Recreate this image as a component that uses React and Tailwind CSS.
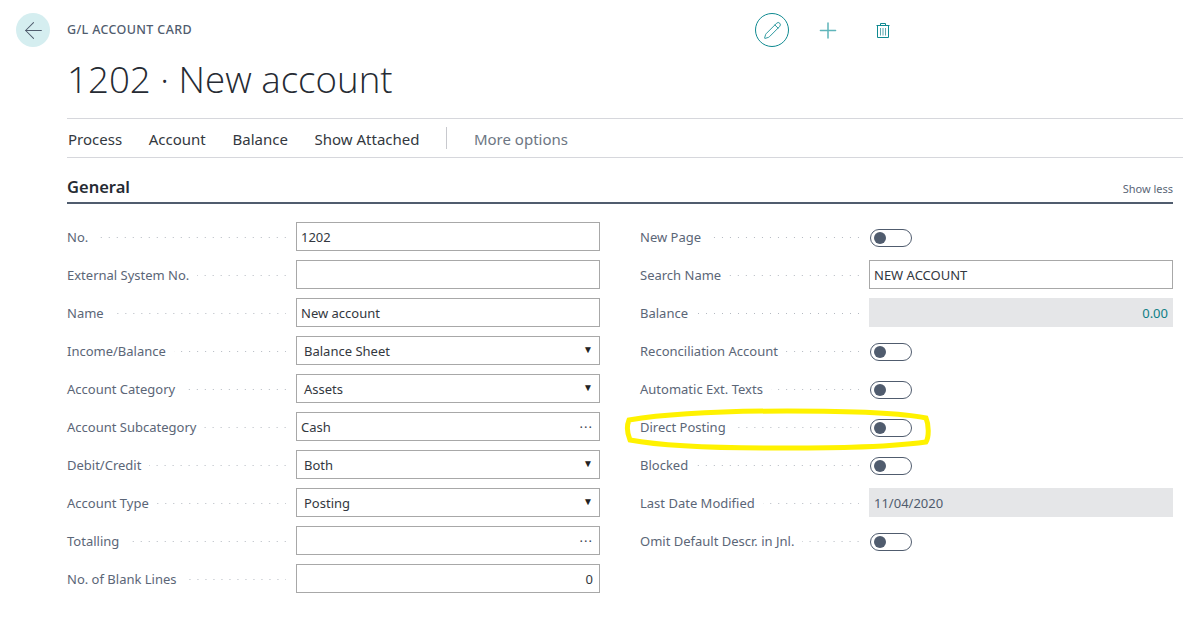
import React from 'react';
import { ArrowLeft, Pencil, Plus } from 'lucide-react';

const font = "font-['Noto_Sans','Open_Sans',sans-serif]";

const leftRows = [
  { label: 'No.', value: '1202' },
  { label: 'External System No.', value: '' },
  { label: 'Name', value: 'New account' },
  { label: 'Income/Balance', value: 'Balance Sheet', kind: 'select' },
  { label: 'Account Category', value: 'Assets', kind: 'select' },
  { label: 'Account Subcategory', value: 'Cash', kind: 'lookup' },
  { label: 'Debit/Credit', value: 'Both', kind: 'select' },
  { label: 'Account Type', value: 'Posting', kind: 'select' },
  { label: 'Totalling', value: '', kind: 'lookup' },
  { label: 'No. of Blank Lines', value: '0', kind: 'number' },
];

const rightRows = [
  { label: 'New Page', kind: 'toggle' },
  { label: 'Search Name', value: 'NEW ACCOUNT' },
  { label: 'Balance', value: '0.00', kind: 'readonlyNumber' },
  { label: 'Reconciliation Account', kind: 'toggle' },
  { label: 'Automatic Ext. Texts', kind: 'toggle' },
  { label: 'Direct Posting', kind: 'toggle' },
  { label: 'Blocked', kind: 'toggle' },
  { label: 'Last Date Modified', value: '11/04/2020', kind: 'readonly' },
  { label: 'Omit Default Descr. in Jnl.', kind: 'toggle' },
];

function TrashIcon() {
  return (
    <svg width="14" height="17" viewBox="0 0 14 17" fill="none" stroke="#0f8a91" strokeWidth="1">
      <path d="M0.5 3.5H13.5" />
      <path d="M4.5 3.5V1.5H9.5V3.5" />
      <path d="M1.5 3.5V15.5H12.5V3.5" />
      <path d="M4.5 6V13.5M7 6V13.5M9.5 6V13.5" stroke="#5fa9ae" />
    </svg>
  );
}

function Control({ value, kind }) {
  if (kind === 'toggle') {
    return (
      <div className="ml-px mt-[2px] flex h-[18px] w-[42px] items-center rounded-full border border-[#505c6e] pl-[3px]">
        <div className="h-[12px] w-[12px] rounded-full bg-[#505c6e]" />
      </div>
    );
  }
  if (kind === 'readonlyNumber') {
    return (
      <div className="flex h-[29px] w-[304px] items-center justify-end bg-[#e5e6e8] pr-[5px] pt-[2px] text-[#0f7f86]">{value}</div>
    );
  }
  if (kind === 'readonly') {
    return <div className="flex h-[29px] w-[304px] items-center bg-[#e5e6e8] pl-[5px] pt-[2px] text-[#505c6e]">{value}</div>;
  }
  return (
    <div className="flex h-[29px] w-[304px] items-center justify-between border border-[#a8a8a8] pl-[4px] pr-[6px] pt-[2px] text-[#333840]">
      <span className={kind === 'select' ? 'pl-[3px]' : ''}>{kind === 'number' ? '' : value}</span>
      {kind === 'select' && <span className="mb-[4px] text-[10px] text-[#222]">▼</span>}
      {kind === 'lookup' && <span className="text-[13px] tracking-[1px] text-[#3c4554]">···</span>}
      {kind === 'number' && <span>{value}</span>}
    </div>
  );
}

function FieldRow({ label, value, kind }) {
  return (
    <div className="flex h-[29px] items-center">
      <div className="flex h-full w-[229px] items-center pr-[10px] pt-[2px]">
        <span className="whitespace-nowrap text-[#5b6677]">{label}</span>
        <span className="ml-[8px] h-px flex-1 bg-[linear-gradient(to_left,#b4b9c1_1px,transparent_1px)] bg-[length:8px_1px] bg-right bg-repeat-x" />
      </div>
      <Control value={value} kind={kind} />
    </div>
  );
}

export default function App() {
  return (
    <div className={`relative h-[639px] w-[1183px] overflow-hidden bg-white text-[13px] ${font}`}>
      <div className="flex">
        {/* Back button */}
        <div className="w-[67px] pl-[16px] pt-[13px]">
          <div className="flex h-[34px] w-[34px] items-center justify-center rounded-full bg-[#d5eef0]">
            <ArrowLeft className="h-[27px] w-[27px] text-[#505c6e]" strokeWidth={0.9} />
          </div>
        </div>

        <div className="flex-1">
          {/* Header */}
          <div className="flex h-[118px] justify-between">
            <div>
              <div className="pt-[21px] text-[12.5px] font-medium leading-[17px] tracking-[0.35px] text-[#505c6e]">G/L ACCOUNT CARD</div>
              <h1 className="mt-[16px] font-['Open_Sans',sans-serif] text-[36.7px] font-light leading-[50px] text-[#262b33]">1202 · New account</h1>
            </div>
            <div className="mr-[293px] flex items-start pt-[13px] text-[#0f8a91]">
              <div className="flex h-[34px] w-[34px] items-center justify-center rounded-full border border-[#0f8a91]">
                <Pencil className="h-[19px] w-[19px]" strokeWidth={1.1} />
              </div>
              <div className="ml-[26px] flex h-[34px] w-[26px] items-center justify-center">
                <Plus className="h-[27px] w-[27px] text-[#5fb5ba]" strokeWidth={1.4} />
              </div>
              <div className="ml-[35px] flex h-[34px] w-[14px] items-center justify-center">
                <TrashIcon />
              </div>
            </div>
          </div>

          {/* Action bar */}
          <div className="flex h-[40px] items-center gap-[26.7px] border-y border-[#d6d7dc] pl-px pt-[2px] text-[15px] text-[#333840]">
            <span>Process</span>
            <span>Account</span>
            <span>Balance</span>
            <span>Show Attached</span>
            <span className="mb-[2px] h-[22px] w-px bg-[#c8c9ce]" />
            <span className="text-[#6d7683]">More options</span>
          </div>

          {/* General section */}
          <div className="mr-[10px] mt-[15px] flex h-[31px] items-center justify-between border-b-2 border-[#505c6e] pb-[1px]">
            <span className="text-[16.5px] font-semibold text-[#262b33]">General</span>
            <span className="pt-[5px] text-[11px] text-[#5b6677]">Show less</span>
          </div>

          <div className="mt-[18px] flex">
            <div className="flex w-[573px] flex-col gap-[9px]">
              {leftRows.map((row) => (
                <FieldRow key={row.label} {...row} />
              ))}
            </div>
            <div className="flex flex-col gap-[9px]">
              {rightRows.map((row) => (
                <FieldRow key={row.label} {...row} />
              ))}
            </div>
          </div>
        </div>
      </div>

      {/* Yellow highlight drawn over the Direct Posting row */}
      <svg className="pointer-events-none absolute left-[622px] top-[405px]" width="312" height="50" viewBox="0 0 312 50">
        <path
          d="M7 15 C50 8 120 6 165 6 C220 6 280 8 304 13 C307 20 307 32 304 37 C260 43 200 43 150 43 C90 43 40 41 8 35 C5 28 5 20 7 15 Z"
          fill="none"
          stroke="#fff200"
          strokeWidth="5"
        />
      </svg>
    </div>
  );
}
